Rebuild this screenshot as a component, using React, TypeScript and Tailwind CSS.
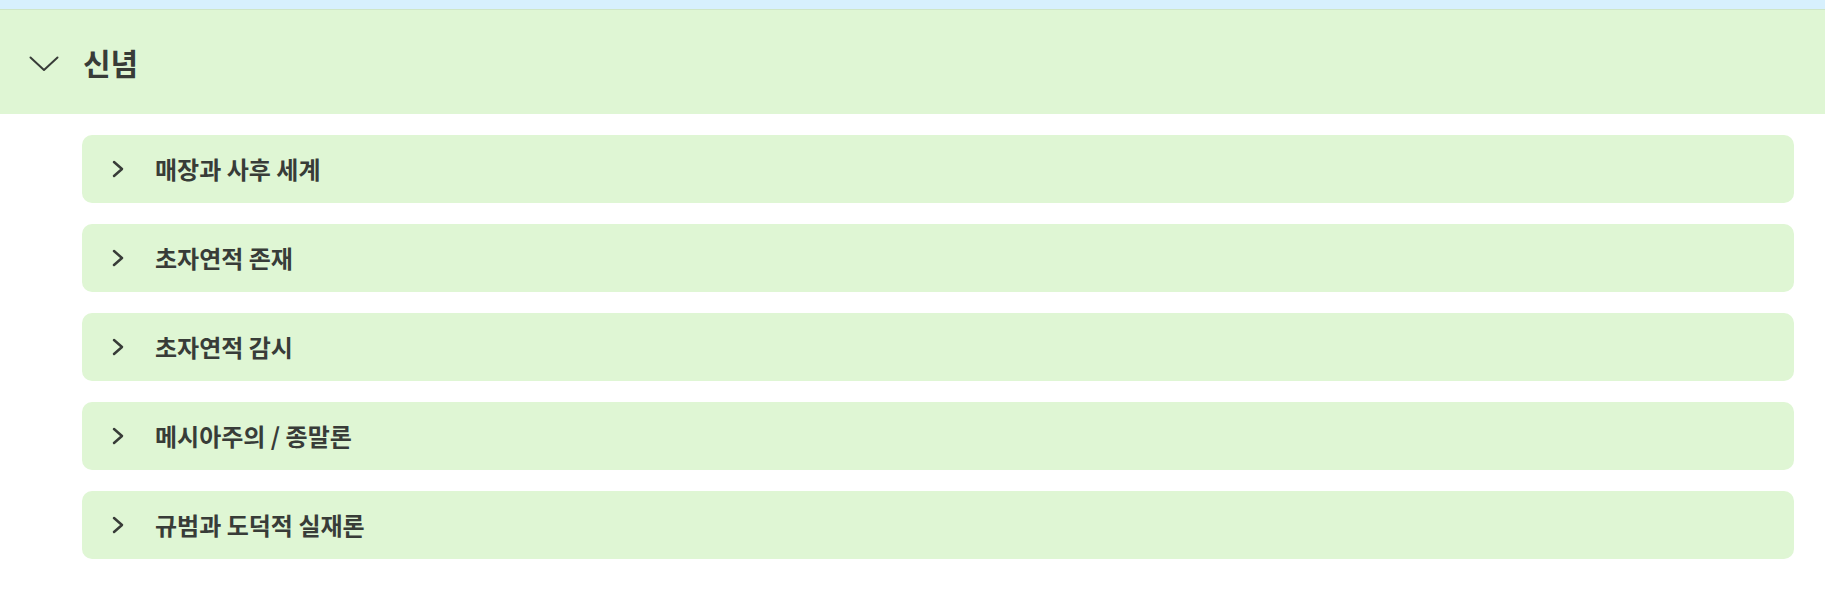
const items = ["매장과 사후 세계", "초자연적 존재", "초자연적 감시", "메시아주의 / 종말론", "규범과 도덕적 실재론"];

function ChevronDown() {
  return (
    <svg width="30" height="18" viewBox="0 0 30 18" fill="none" className="mt-[3px]">
      <path d="M1.5 2.5 L15 15 L28.5 2.5" stroke="#383c38" strokeWidth="2" strokeLinecap="round" strokeLinejoin="round" />
    </svg>
  );
}

function ChevronRight() {
  return (
    <svg width="12" height="18" viewBox="0 0 12 18" fill="none">
      <path d="M2 2 L10 9 L2 16" stroke="#383c38" strokeWidth="2.5" strokeLinecap="round" strokeLinejoin="round" />
    </svg>
  );
}

export default function App() {
  return (
    <div className="w-[1825px] h-[592px] bg-white" style={{ fontFamily: '"Noto Sans CJK KR", "Noto Sans", sans-serif' }}>
      <div className="h-[9px] bg-[#d7f0fd]" />
      <div className="h-[105px] bg-[#dff6d4] border-t border-[#cfe6c6] flex items-center pl-[29px] gap-[24px]">
        <ChevronDown />
        <h2 className="text-[30px] font-bold text-[#383c38] leading-none">신념</h2>
      </div>
      <div className="pl-[82px] pr-[31px] pt-[21px] flex flex-col gap-[21px]">
        {items.map((t) => (
          <div key={t} className="h-[68px] rounded-[10px] bg-[#dff6d4] flex items-center pl-[30px] gap-[31px]">
            <ChevronRight />
            <span className="text-[24px] font-bold text-[#383c38] leading-none">{t}</span>
          </div>
        ))}
      </div>
    </div>
  );
}
